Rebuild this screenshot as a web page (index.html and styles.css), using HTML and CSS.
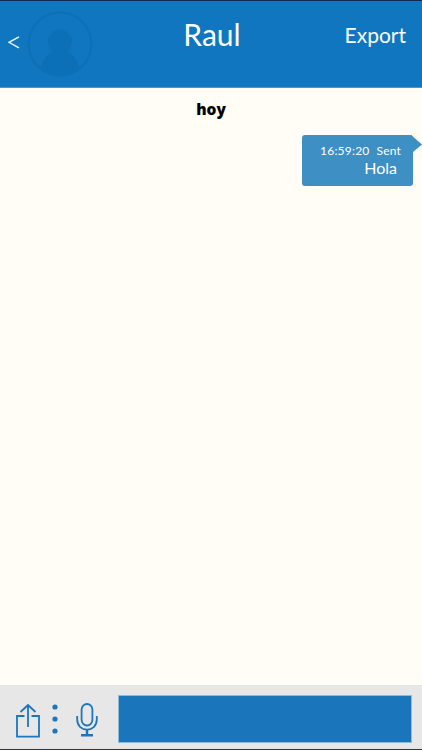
FILE: index.html
```html
<!DOCTYPE html>
<html lang="es">
<head>
    <meta charset="UTF-8">
    <meta name="viewport" content="width=device-width, initial-scale=1.0">
    <title>Raul</title>
    <link rel="stylesheet" href="styles.css">
</head>
<body>
    <!-- Header -->
    <header class="header">
        <div class="header-left">
            <button class="back" aria-label="Back">
                <svg width="12" height="13" viewBox="0 0 12 13"><path d="M11 0.8 L1 6.3 L11 11.8"/></svg>
            </button>
            <svg class="avatar" width="66" height="66" viewBox="0 0 66 66">
                <defs>
                    <clipPath id="avatar-clip"><circle cx="33" cy="33" r="31.5"/></clipPath>
                </defs>
                <circle class="avatar-ring" cx="33" cy="33" r="31.5"/>
                <g class="avatar-person" clip-path="url(#avatar-clip)">
                    <ellipse cx="33" cy="31" rx="11.8" ry="12.5"/>
                    <path d="M13 66 C13 50 20 42 28 40 H38 C46 42 53 50 53 66 Z"/>
                </g>
            </svg>
        </div>
        <div class="title">Raul</div>
        <button class="export">Export</button>
    </header>

    <!-- Messages -->
    <main class="messages">
        <div class="day">hoy</div>
        <div class="message sent">
            <div class="message-info"><span>16:59:20</span><span>Sent</span></div>
            <div class="message-text">Hola</div>
            <svg class="tail" width="11" height="18" viewBox="0 0 11 18"><path d="M0 0 L11 9.5 L2 17 L0 17 Z"/></svg>
        </div>
    </main>

    <!-- Input bar -->
    <footer class="toolbar">
        <button class="tool share" aria-label="Share">
            <svg width="24" height="35" viewBox="0 0 24 35">
                <path d="M8.5 13 H1 V33.6 H23 V13 H15.5"/>
                <path d="M12 24 V2 M4.5 9 L12 2 L19.5 9"/>
            </svg>
        </button>
        <button class="tool more" aria-label="More">
            <svg width="6" height="30" viewBox="0 0 6 30">
                <circle cx="3" cy="3" r="2.6"/>
                <circle cx="3" cy="15" r="2.6"/>
                <circle cx="3" cy="27" r="2.6"/>
            </svg>
        </button>
        <button class="tool mic" aria-label="Record">
            <svg width="22" height="34" viewBox="0 0 22 34">
                <rect x="5.6" y="1" width="10.8" height="21.5" rx="5.4"/>
                <path d="M1.2 13 V16.5 C1.2 30 20.8 30 20.8 16.5 V13"/>
                <path class="stand" d="M11 26.5 V32 M5 32.3 H17"/>
            </svg>
        </button>
        <input class="text-input" type="text" aria-label="Message">
    </footer>
</body>
</html>
```
FILE: styles.css
```css
* {
    box-sizing: border-box;
}
body {
    display: flex;
    flex-direction: column;
    height: 100vh;
    margin: 0;
    font-family: Lato, sans-serif;
    background: #fffdf6;
    overflow: hidden;
}
button {
    padding: 0;
    border: none;
    background: none;
    font-family: inherit;
    color: inherit;
    cursor: pointer;
}
svg {
    display: block;
    fill: none;
}
.header {
    display: grid;
    grid-template-columns: 1fr auto 1fr;
    align-items: start;
    height: 87px;
    margin-bottom: 1px;
    padding: 0 16px 0 8px;
    border-top: 1px solid #0b2c55;
    background: #0f76bf;
    box-shadow: 0 1px 0 #4d99cd;
    color: #fff;
}
.header-left {
    display: flex;
    align-items: center;
    gap: 7px;
    padding-top: 10px;
}
.back {
    margin-top: -3px;
}
.back path {
    stroke: #e6f3fb;
    stroke-width: 1.5;
}
.avatar-ring {
    stroke: #0d70b7;
    stroke-width: 2;
}
.avatar-person {
    fill: #0b70b7;
}
.title {
    padding: 15px 0 0 10px;
    font-size: 30px;
    line-height: 36px;
}
.export {
    justify-self: end;
    padding-top: 21px;
    font-size: 21px;
    line-height: 26px;
}
.messages {
    display: flex;
    flex: 1;
    flex-direction: column;
}
.day {
    padding-top: 10px;
    font-family: "Open Sans", sans-serif;
    font-size: 15.5px;
    font-weight: 800;
    line-height: 22px;
    text-align: center;
    color: #000;
}
.message {
    position: relative;
    align-self: flex-end;
    width: 111px;
    height: 51px;
    margin: 15px 9px 0 0;
    border-radius: 3px;
    background: #3d8fc4;
    color: #fff;
    text-align: right;
}
.message-info {
    display: flex;
    justify-content: flex-end;
    gap: 7px;
    padding: 8px 12px 0 0;
    font-size: 12px;
    letter-spacing: 0.2px;
    line-height: 16px;
}
.message-text {
    padding-right: 16px;
    font-size: 16px;
    line-height: 17px;
}
.tail {
    position: absolute;
    top: 0;
    right: -9px;
    fill: #3d8fc4;
}
.toolbar {
    display: flex;
    align-items: flex-start;
    height: 65px;
    padding: 10px 10px 0 16px;
    border-bottom: 1px solid #333;
    background: #e7e7e8;
}
.tool {
    margin-top: 8px;
}
.share path, .mic path, .mic rect {
    stroke: #1d76bb;
    stroke-width: 1.8;
}
.more {
    margin: 9px 0 0 12px;
}
.more circle {
    fill: #1d76bb;
}
.mic {
    margin-left: 18px;
}
.mic .stand {
    stroke-width: 2.4;
}
.text-input {
    flex: 1;
    min-width: 0;
    height: 48px;
    margin-left: 20px;
    padding: 0 10px;
    border: 1px solid #8dbbdc;
    border-radius: 0;
    background: #1b75bb;
    background-clip: padding-box;
    color: #fff;
    font: 16px Lato, sans-serif;
}
```
